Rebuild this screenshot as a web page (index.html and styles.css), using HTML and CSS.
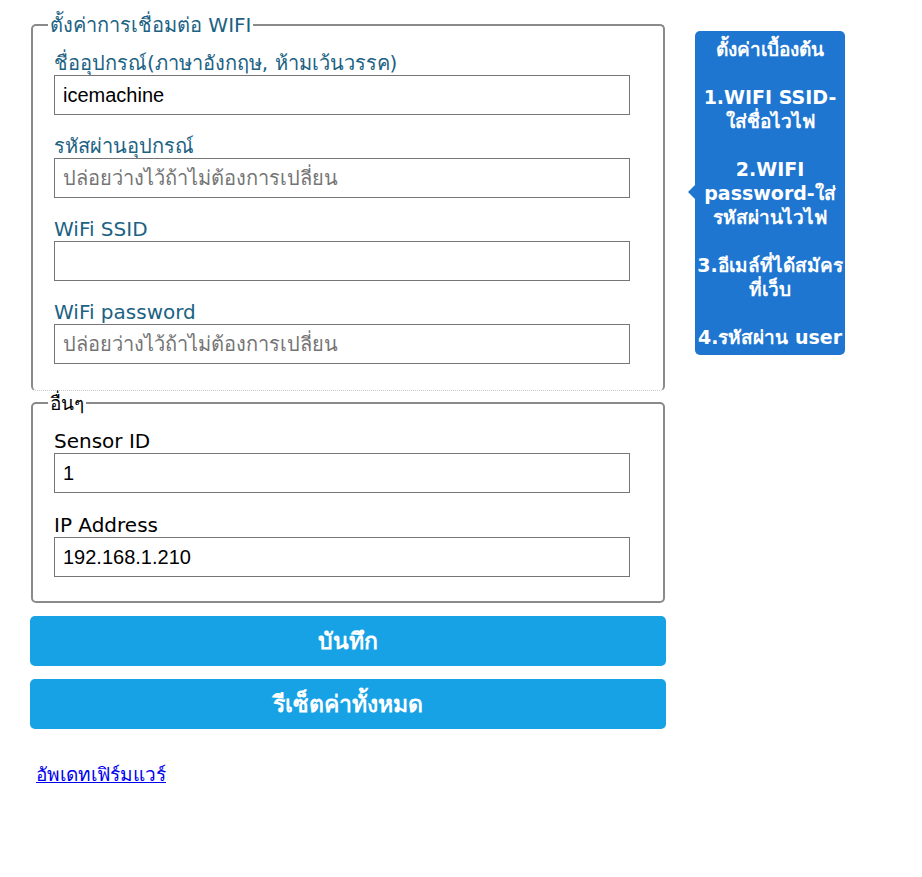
FILE: index.html
```html
<!DOCTYPE html>
<html lang="th">
<head>
<meta charset="utf-8">
<title>ตั้งค่า</title>
<link rel="stylesheet" href="styles.css">
</head>
<body>
<div class="page">
  <div class="main">
    <form class="form">
      <fieldset class="box box-wifi">
        <legend class="legend legend-wifi">ตั้งค่าการเชื่อมต่อ WIFI</legend>
        <div class="field">
          <label class="label label-wifi">ชื่ออุปกรณ์(ภาษาอังกฤษ, ห้ามเว้นวรรค)</label>
          <input class="input" type="text" value="icemachine">
        </div>
        <div class="field">
          <label class="label label-wifi">รหัสผ่านอุปกรณ์</label>
          <input class="input" type="password" placeholder="ปล่อยว่างไว้ถ้าไม่ต้องการเปลี่ยน">
        </div>
        <div class="field">
          <label class="label label-wifi">WiFi SSID</label>
          <input class="input" type="text" value="">
        </div>
        <div class="field">
          <label class="label label-wifi">WiFi password</label>
          <input class="input" type="password" placeholder="ปล่อยว่างไว้ถ้าไม่ต้องการเปลี่ยน">
        </div>
      </fieldset>
      <fieldset class="box box-other">
        <legend class="legend legend-other">อื่นๆ</legend>
        <div class="field">
          <label class="label">Sensor ID</label>
          <input class="input" type="text" value="1">
        </div>
        <div class="field">
          <label class="label">IP Address</label>
          <input class="input" type="text" value="192.168.1.210">
        </div>
      </fieldset>
      <button class="btn btn-save" type="button">บันทึก</button>
      <button class="btn btn-reset" type="button">รีเซ็ตค่าทั้งหมด</button>
    </form>
    <a class="update-link" href="#">อัพเดทเฟิร์มแวร์</a>
  </div>
  <div class="tip">ตั้งค่าเบื้องต้น<br><br>1.WIFI SSID-<br>ใส่ชื่อไวไฟ<br><br>2.WIFI<br>password-ใส่<br>รหัสผ่านไวไฟ<br><br>3.อีเมล์ที่ได้สมัคร<br>ที่เว็บ<br><br>4.รหัสผ่าน user</div>
</div>
</body>
</html>
```

FILE: styles.css
```css
html, body {
  margin: 0;
  padding: 0;
  background: #ffffff;
}

body {
  font-family: "DejaVu Sans", Verdana, sans-serif;
}

.page {
  display: flex;
  align-items: flex-start;
  padding: 14px 0 0 30px;
  gap: 29px;
}

.main {
  width: 636px;
  display: flex;
  flex-direction: column;
}

.form {
  display: flex;
  flex-direction: column;
}

.box {
  margin: 0 1px;
  padding: 0 21px 25px 21px;
  border: 2px solid #8a8a8a;
  border-radius: 5px;
  min-width: 0;
}

.box-wifi {
  border-bottom: 1px dotted #c8c8c8;
  padding-bottom: 26px;
}

.box-other {
  padding-bottom: 24px;
}

.legend {
  padding: 0 2px;
  margin-left: -6px;
}

.legend-wifi {
  font-size: 20px;
  line-height: 22px;
  color: #1b6283;
}

.legend-other {
  font-size: 19px;
  line-height: 24px;
  color: #000000;
}

.field {
  display: flex;
  flex-direction: column;
  margin-top: 19px;
}

.box-wifi .field:first-of-type {
  margin-top: 15px;
}

.box-other .field:first-of-type {
  margin-top: 14px;
}

.box-other .field {
  margin-top: 20px;
}

.label {
  display: block;
  font-size: 20px;
  line-height: 24px;
  color: #000000;
}

.label-wifi {
  color: #1b6283;
}

.input {
  box-sizing: border-box;
  width: 576px;
  height: 40px;
  margin: 0;
  padding: 0 8px;
  border: 1px solid #767676;
  border-radius: 0;
  font-family: "Liberation Sans", Arial, sans-serif;
  font-size: 20px;
  color: #000000;
  background: #ffffff;
}

.input::placeholder {
  color: #757575;
}

.btn {
  display: block;
  width: 636px;
  height: 50px;
  border: none;
  border-radius: 5px;
  background: #18a2e6;
  color: #ffffff;
  font-family: "DejaVu Sans", Tahoma, sans-serif;
  font-weight: bold;
  font-size: 23px;
  cursor: pointer;
}

.btn-save {
  margin-top: 13px;
}

.btn-reset {
  margin-top: 13px;
}

.update-link {
  align-self: flex-start;
  margin: 34px 0 0 6px;
  font-family: "Liberation Serif", "Times New Roman", serif;
  font-size: 19px;
  line-height: 24px;
  color: #0000ee;
}

.tip {
  position: relative;
  box-sizing: border-box;
  width: 150px;
  margin-top: 17px;
  padding: 6px 0;
  background: #1e76d1;
  border-radius: 5px;
  color: #ffffff;
  font-weight: bold;
  font-size: 19px;
  line-height: 24px;
  text-align: center;
  white-space: nowrap;
}

.tip::before {
  content: "";
  position: absolute;
  left: -7px;
  top: 154px;
  border-style: solid;
  border-width: 7px 7px 7px 0;
  border-color: transparent #1e76d1 transparent transparent;
}
```
